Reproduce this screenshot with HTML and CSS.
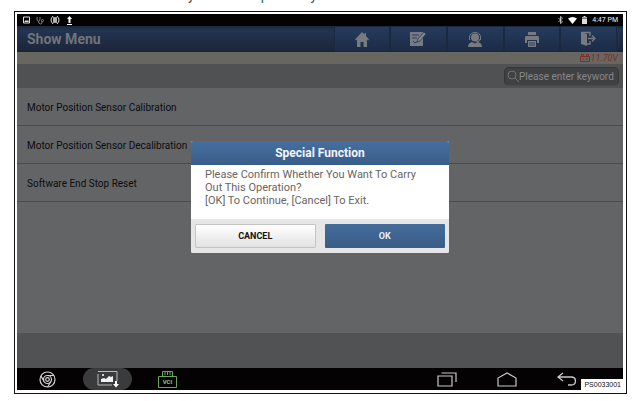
FILE: index.html
```html
<!DOCTYPE html>
<html lang="en">
<head>
    <meta charset="UTF-8">
    <title>Show Menu</title>
    <link rel="stylesheet" href="styles.css">
</head>
<body>
    <div class="cut-line" aria-hidden="true">
        <span>y</span><span class="link">p</span><span>y</span>
    </div>
    <figure class="frame">
        <div class="screen">
            <div class="status-bar">
                <div class="status-icons">
                    <svg width="7" height="8" viewBox="0 0 7 8"><path d="M.5 1h6v6h-6z" fill="none" stroke="#ddd"/><path d="M1 6l2-2 1 1 1-1 1 2z" fill="#ddd"/></svg>
                    <svg width="8" height="9" viewBox="0 0 8 9" fill="none" stroke="#999" stroke-width=".8"><path d="M1 1v2q0 2 1.500 2T4 3V1M2.500 5q0 3 2 3T6 5"/><circle cx="6.500" cy="4.500" r="1"/></svg>
                    <svg width="10" height="10" viewBox="0 0 10 10" fill="none" stroke="#ddd"><path d="M3 1Q-1 5 3 9M7 1q4 4 0 8"/><circle cx="5" cy="5" r="1.500"/><path d="M3 3l4 4M7 3L3 7M3 2.500h4M3 7.500h4" stroke-width=".7"/></svg>
                    <svg width="7" height="9" viewBox="0 0 7 9" fill="#fff"><path d="M3.500 0L6 3H4.500v4h-2V3H1zM1 8h5v1H1z"/></svg>
                </div>
                <div class="status-icons right">
                    <svg width="5" height="8" viewBox="0 0 5 8"><path d="M.5 2l4 4-2 1.500v-7L4.500 2l-4 4" fill="none" stroke="#ddd" stroke-width=".8"/></svg>
                    <svg width="9" height="7" viewBox="0 0 9 7"><path d="M0 1.500Q4.500-1.500 9 1.500L4.500 7z" fill="#fff"/></svg>
                    <svg width="5" height="8" viewBox="0 0 5 8"><path d="M1.500 0h2v1H5v7H0V1h1.500z" fill="#ddd"/><path d="M0 1.500h5V3H0z" fill="#777"/></svg>
                    <span>4:47 PM</span>
                </div>
            </div>

            <div class="app">
                <header class="header">
                    <h1>Show Menu</h1>
                    <nav class="toolbar">
                        <button aria-label="Home"><svg width="14" height="15" viewBox="0 0 14 15"><path d="M7 0l2.500 2.500V1H11v3l3 3.500-1 1-1-1V15H8.500v-5h-3v5H2V7.500l-1 1-1-1z" fill="#777b80"/></svg></button>
                        <button aria-label="Edit"><svg width="17" height="16" viewBox="0 0 17 16"><path d="M0 1h13v14H0z" fill="#777b80"/><path d="M2 4h7M2 7h5M3 10l2 2 3-2" stroke="#283d5d" fill="none"/><path d="M7 11l1-3 6-7 2 2-6 7z" fill="#858789" stroke="#283d5d" stroke-width=".8"/></svg></button>
                        <button aria-label="Support"><svg width="16" height="15" viewBox="0 0 16 15"><circle cx="8" cy="5.500" r="4" fill="#777b80"/><path d="M2.500 8V5a5.500 4.500 0 0 1 11 0v3M13 7q0 3-4 3" fill="none" stroke="#777b80"/><path d="M1 15q0-4 4-5l3 1.500L11 10q4 1 4 5z" fill="#777b80"/></svg></button>
                        <button aria-label="Print"><svg width="14" height="15" viewBox="0 0 14 15"><path d="M3 0h8v3H3zM1 4h12l1 1v6h-2V8H2v3H0V5zM3 9h8v6H3z" fill="#777b80"/><path d="M4 11h6M4 13h6" stroke="#34465f"/></svg></button>
                        <button aria-label="Exit"><svg width="15" height="16" viewBox="0 0 15 16"><path d="M0 1l6 2v12l-6-2z" fill="#777b80"/><path d="M0 1.500h9V5M9 10v3H6M7 7.500h6M11 4.500l3 3-3 3" fill="none" stroke="#777b80" stroke-width="1.300"/></svg></button>
                    </nav>
                </header>

                <div class="voltage">
                    <svg width="10" height="8" viewBox="0 0 10 8" fill="none" stroke="#7c3029"><path d="M.5 2.500h9v5h-9zM1.500 2V.5h2V2M6.500 2V.5h2V2M2 5h2M6 5h2"/></svg>
                    <span>11.70V</span>
                </div>

                <div class="search-bar">
                    <label class="search">
                        <svg width="12" height="13" viewBox="0 0 12 13" fill="none" stroke="#707274"><circle cx="5" cy="5" r="4"/><path d="M8 8l4 4"/></svg>
                        <input type="text" placeholder="Please enter keyword" aria-label="Search">
                    </label>
                </div>

                <ul class="menu">
                    <li><a href="#">Motor Position Sensor Calibration</a></li>
                    <li><a href="#">Motor Position Sensor Decalibration</a></li>
                    <li><a href="#">Software End Stop Reset</a></li>
                </ul>

                <div class="footer"></div>

                <div class="overlay">
                    <div class="dialog" role="dialog" aria-labelledby="dialog-title">
                        <h2 id="dialog-title">Special Function</h2>
                        <p>Please Confirm Whether You Want To Carry Out This Operation?<br>[OK] To Continue, [Cancel] To Exit.</p>
                        <div class="actions">
                            <button class="cancel">CANCEL</button>
                            <button class="ok">OK</button>
                        </div>
                    </div>
                </div>
            </div>

            <div class="nav-bar">
                <div class="nav-group">
                    <button class="nav-button" aria-label="Browser"><svg width="17" height="17" viewBox="0 0 17 17" fill="none" stroke="#d4d4d4" stroke-width="1.200"><circle cx="8.500" cy="8.500" r="7.500"/><circle cx="8.500" cy="8.500" r="4"/><circle cx="8.500" cy="8.500" r="1.800"/><path d="M8.500 4.500h6.500M5 10.500L2 5M12 10.500L8.500 16"/></svg></button>
                    <button class="nav-button active" aria-label="Screenshot"><svg width="22" height="18" viewBox="0 0 22 18"><path d="M4 15H1V4M1 1.500h19V11M4 15h11" fill="none" stroke="#bbb"/><path d="M4 12V9l3-1 2 1 3-3 2 1 2-1v6z" fill="#f2f2f2"/><circle cx="6" cy="5" r="1" fill="#fff"/><path d="M18 11h2v3h2l-3 3.500L16 14h2z" fill="#fff"/></svg></button>
                    <button class="nav-button" aria-label="VCI"><svg width="19" height="17" viewBox="0 0 19 17" fill="none" stroke="#69a65f"><path d="M.5 5.500h18v11H.5zM4.500 5V.5h10V5M7 1v3M9.500 1v3M12 1v3"/><text x="9.500" y="13" class="vci">VCI</text></svg></button>
                </div>
                <div class="nav-group system">
                    <button class="nav-button" aria-label="Recent apps"><svg width="20" height="15" viewBox="0 0 20 15" fill="none" stroke="#c8c8c8" stroke-width="1.200"><path d="M1 4h14v10H1zM4.500 1H19v9"/></svg></button>
                    <button class="nav-button" aria-label="Home screen"><svg width="20" height="15" viewBox="0 0 20 15" fill="none" stroke="#c8c8c8" stroke-width="1.200"><path d="M1 14V6l9-5 9 5v8z"/></svg></button>
                    <button class="nav-button" aria-label="Back"><svg width="20" height="15" viewBox="0 0 20 15" fill="none" stroke="#c8c8c8" stroke-width="1.300"><path d="M6 1L1 5l5 4M1 5h13q4.500 0 4.500 4t-4.500 4h-3"/></svg></button>
                </div>
            </div>
            <figcaption class="tag">PS0033001</figcaption>
        </div>
    </figure>
</body>
</html>
```
FILE: styles.css
```css
* {
    box-sizing: border-box;
}
body {
    margin: 0;
    height: 100vh;
    display: flex;
    flex-direction: column;
    background: #fff;
    font-family: Roboto, "Liberation Sans", sans-serif;
    overflow: hidden;
}
button {
    border: none;
    background: none;
    padding: 0;
    font-family: inherit;
}
svg {
    display: block;
    flex: none;
}

/* descenders of the paragraph above the figure */
.cut-line {
    height: 3px;
    overflow: hidden;
    display: flex;
    align-items: flex-end;
    gap: 42px;
    padding-left: 188px;
    font-size: 14px;
    line-height: 16px;
    color: #444;
}
.cut-line .link {
    margin-left: 24px;
    color: #2b6680;
}

.frame {
    flex: 1;
    display: flex;
    margin: 8px 10px 7px 14px;
    padding: 2px 3px 3px 2px;
    border: 1px solid #111;
}
.screen {
    flex: 1;
    display: flex;
    flex-direction: column;
    position: relative;
    background: #050203;
}

.status-bar {
    height: 12px;
    display: flex;
    align-items: center;
    justify-content: space-between;
    padding: 0 5px 0 6px;
    color: #eee;
    font-size: 7px;
}
.status-icons {
    display: flex;
    align-items: center;
    gap: 6px;
}
.status-icons.right {
    gap: 5px;
}

.app {
    flex: 1;
    display: flex;
    flex-direction: column;
    position: relative;
    background: #636466;
}
.header {
    height: 26px;
    display: flex;
    align-items: center;
    justify-content: space-between;
    padding: 0 6px 0 10px;
    background: linear-gradient(#1c273b, #233451 15%, #1b2539);
}
.header h1 {
    margin: 0;
    font-size: 14px;
    font-weight: 700;
    color: #727477;
}
.toolbar {
    width: 48%;
    height: 100%;
    display: grid;
    grid-template-columns: repeat(5, 1fr);
}
.toolbar button {
    display: flex;
    align-items: center;
    justify-content: center;
    border: 1px solid #1a2940;
    background: linear-gradient(#263b5d, #1c2b46);
}

.voltage {
    height: 12px;
    display: flex;
    align-items: center;
    justify-content: flex-end;
    gap: 1px;
    padding-right: 5px;
    background: #676660;
    color: #7c3029;
    font-size: 9px;
    font-style: italic;
}
.search-bar {
    height: 24px;
    display: flex;
    align-items: center;
    justify-content: flex-end;
    padding-right: 4px;
    background: #505153;
}
.search {
    width: 115px;
    height: 19px;
    display: flex;
    align-items: center;
    padding-left: 2px;
    border: 1px solid #343536;
    border-bottom-color: #48494a;
    border-radius: 5px;
    background: #404143;
}
.search input {
    flex: 1;
    min-width: 0;
    padding: 0;
    border: none;
    outline: none;
    background: none;
    font-family: inherit;
    font-size: 10px;
    color: #85878a;
}
.search input::placeholder {
    color: #85878a;
}

.menu {
    flex: 1;
    margin: 0;
    padding: 0;
    list-style: none;
}
.menu li {
    height: 38px;
    border-bottom: 1px solid #4a4b4d;
}
.menu a {
    display: block;
    padding-left: 10px;
    font-size: 10px;
    line-height: 40px;
    color: #0c0c0d;
    text-decoration: none;
}
.footer {
    height: 35px;
    background: #515254;
}

.overlay {
    position: absolute;
    inset: 0;
    display: flex;
    align-items: center;
    justify-content: center;
}
.dialog {
    width: 258px;
    background: #fff;
    border-radius: 2px;
    overflow: hidden;
}
.dialog h2 {
    margin: 0;
    font-size: 12px;
    line-height: 24px;
    font-weight: 700;
    text-align: center;
    color: #f2f5f9;
    background: linear-gradient(#456f9f, #395d8a);
}
.dialog p {
    margin: 0;
    padding: 3px 14px 12px;
    font-size: 11px;
    line-height: 13px;
    color: #6a6462;
}
.actions {
    display: grid;
    grid-template-columns: 1fr 1fr;
    gap: 9px;
    padding: 5px 4px;
    background: #e6e6e7;
}
.actions button {
    height: 24px;
    border-radius: 1px;
    font-size: 9px;
    font-weight: 700;
}
.actions .cancel {
    color: #111;
    border: 1px solid #c4c4c5;
    background: linear-gradient(#fff, #e2e2e3);
}
.actions .ok {
    color: #e8eef5;
    background: linear-gradient(#446c9b, #3a5c87);
}

.nav-bar {
    height: 22px;
    display: flex;
    justify-content: space-between;
    padding: 0 46px 0 6px;
}
.nav-group {
    display: flex;
    gap: 11px;
}
.nav-button {
    width: 49px;
    display: flex;
    align-items: center;
    justify-content: center;
}
.nav-button.active {
    border-radius: 12px;
    background: #3a3b3d;
}
.system {
    gap: 40px;
}
.system .nav-button {
    width: 20px;
}
.vci {
    font-size: 6px;
    font-weight: 700;
    text-anchor: middle;
    fill: #8fc785;
    stroke: none;
}

.tag {
    position: absolute;
    right: 0;
    bottom: 0;
    padding: 0 2px 0 3px;
    background: #fff;
    color: #111;
    font-family: "Liberation Sans", Arial, sans-serif;
    font-size: 7px;
    line-height: 11px;
}
```
